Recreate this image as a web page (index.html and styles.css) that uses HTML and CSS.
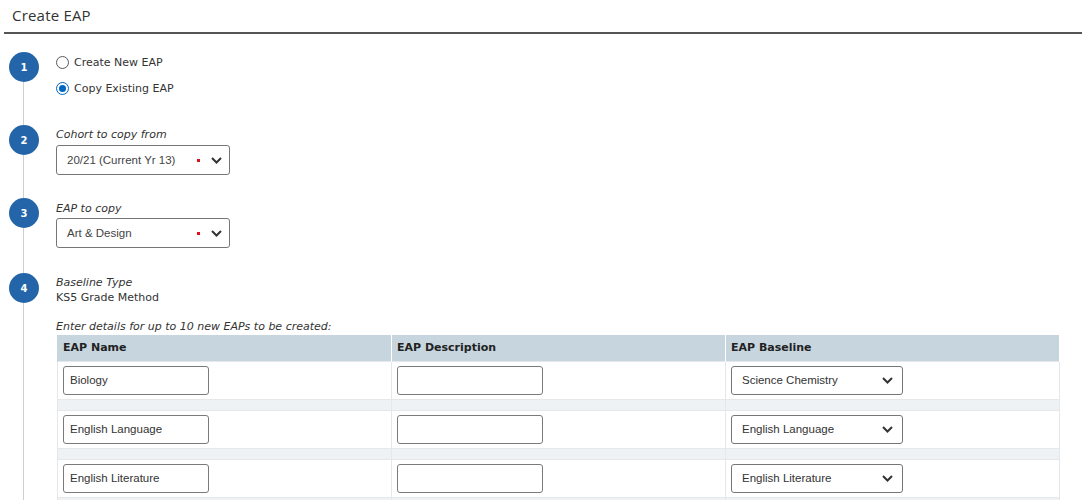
FILE: index.html
```html
<!DOCTYPE html>
<html>
<head>
<meta charset="utf-8">
<title>Create EAP</title>
<link rel="stylesheet" href="styles.css">
</head>
<body>
<header class="page-head">
  <h1 class="page-title">Create EAP</h1>
</header>

<div class="steps">
  <div class="step step-1">
    <div class="rail"><div class="num">1</div><div class="line"></div></div>
    <div class="body">
      <label class="radio-row"><span class="radio"></span>Create New EAP</label>
      <label class="radio-row"><span class="radio checked"></span>Copy Existing EAP</label>
    </div>
  </div>

  <div class="step step-2">
    <div class="rail"><div class="num">2</div><div class="line"></div></div>
    <div class="body">
      <div class="field-label">Cohort to copy from</div>
      <div class="fake-select wide">
        <span class="sel-text">20/21 (Current Yr 13)</span>
        <span class="req"></span>
        <svg class="chev" width="11" height="7" viewBox="0 0 11 7"><polyline points="1,1 5.5,5.5 10,1" fill="none" stroke="#333" stroke-width="2"/></svg>
      </div>
    </div>
  </div>

  <div class="step step-3">
    <div class="rail"><div class="num">3</div><div class="line"></div></div>
    <div class="body">
      <div class="field-label">EAP to copy</div>
      <div class="fake-select wide">
        <span class="sel-text">Art &amp; Design</span>
        <span class="req"></span>
        <svg class="chev" width="11" height="7" viewBox="0 0 11 7"><polyline points="1,1 5.5,5.5 10,1" fill="none" stroke="#333" stroke-width="2"/></svg>
      </div>
    </div>
  </div>

  <div class="step step-4">
    <div class="rail"><div class="num">4</div><div class="line"></div></div>
    <div class="body">
      <div class="field-label">Baseline Type</div>
      <div class="field-value">KS5 Grade Method</div>
      <div class="field-label enter">Enter details for up to 10 new EAPs to be created:</div>
      <table class="eap-table">
        <thead>
          <tr><th>EAP Name</th><th>EAP Description</th><th>EAP Baseline</th></tr>
        </thead>
        <tbody>
          <tr class="row">
            <td><div class="txt">Biology</div></td>
            <td><div class="txt"></div></td>
            <td><div class="fake-select base"><span class="sel-text">Science Chemistry</span><svg class="chev" width="11" height="7" viewBox="0 0 11 7"><polyline points="1,1 5.5,5.5 10,1" fill="none" stroke="#333" stroke-width="2"/></svg></div></td>
          </tr>
          <tr class="spacer"><td></td><td></td><td></td></tr>
          <tr class="row">
            <td><div class="txt">English Language</div></td>
            <td><div class="txt"></div></td>
            <td><div class="fake-select base"><span class="sel-text">English Language</span><svg class="chev" width="11" height="7" viewBox="0 0 11 7"><polyline points="1,1 5.5,5.5 10,1" fill="none" stroke="#333" stroke-width="2"/></svg></div></td>
          </tr>
          <tr class="spacer"><td></td><td></td><td></td></tr>
          <tr class="row">
            <td><div class="txt">English Literature</div></td>
            <td><div class="txt"></div></td>
            <td><div class="fake-select base"><span class="sel-text">English Literature</span><svg class="chev" width="11" height="7" viewBox="0 0 11 7"><polyline points="1,1 5.5,5.5 10,1" fill="none" stroke="#333" stroke-width="2"/></svg></div></td>
          </tr>
          <tr class="spacer"><td></td><td></td><td></td></tr>
        </tbody>
      </table>
    </div>
  </div>
</div>
</body>
</html>
```

FILE: styles.css
```css
* { box-sizing: border-box; }
html, body { margin: 0; padding: 0; background: #fff; }
body {
  font-family: "DejaVu Sans", Verdana, sans-serif;
  font-size: 11px;
  color: #333;
  width: 1090px;
  height: 500px;
  overflow: hidden;
}

.page-head {
  margin: 0 8px 0 4px;
  height: 34px;
  border-bottom: 2px solid #555;
  padding-left: 8px;
}
.page-title {
  margin: 0;
  font-family: "Open Sans", "Noto Sans", sans-serif;
  font-weight: 400;
  font-size: 15px;
  letter-spacing: 0.2px;
  line-height: 30px;
  color: #333;
}

.steps { padding-top: 18px; }
.step { display: flex; }
.rail {
  width: 56px;
  flex: none;
  display: flex;
  flex-direction: column;
  padding-left: 9px;
}
.num {
  width: 30px;
  height: 30px;
  border-radius: 50%;
  background: #2465a9;
  color: #fff;
  font-weight: bold;
  font-size: 10px;
  display: flex;
  align-items: center;
  justify-content: center;
  flex: none;
}
.line {
  flex: 1;
  width: 1px;
  margin-left: 14px;
  background: #cfcfcf;
}
.body { flex: 1; }

.step-1 .body { height: 73px; }
.radio-row {
  display: flex;
  align-items: center;
  height: 20px;
  margin-bottom: 6px;
  color: #333;
}
.radio {
  width: 13px;
  height: 13px;
  border: 1px solid #595959;
  border-radius: 50%;
  margin-right: 5px;
  display: flex;
  align-items: center;
  justify-content: center;
  flex: none;
}
.radio.checked { border-color: #0067c0; }
.radio.checked::after {
  content: "";
  width: 7px;
  height: 7px;
  border-radius: 50%;
  background: #0067c0;
}

.field-label {
  font-style: italic;
  line-height: 14px;
  color: #333;
}
.field-value { line-height: 15px; color: #333; }

.step-2 .body { padding-top: 3px; height: 73px; }
.step-2 .fake-select { margin-top: 3px; }
.step-3 .body { padding-top: 4px; height: 75px; }
.step-3 .fake-select { margin-top: 2px; }
.step-4 .body { padding-top: 2px; padding-bottom: 20px; }
.step-4 .field-label:first-child { line-height: 15px; }
.enter { margin-top: 15px; margin-bottom: 1px; }

.fake-select {
  display: flex;
  align-items: center;
  height: 30px;
  border: 1px solid #767676;
  border-radius: 3px;
  background: #fff;
  font-family: "Liberation Sans", Arial, sans-serif;
  font-size: 11.5px;
  color: #444;
  padding: 0 7px 0 10px;
}
.fake-select.wide { width: 174px; }
.fake-select .sel-text { flex: 1; }
.req {
  width: 3px;
  height: 3px;
  background: #e0101a;
  margin-right: 11px;
}
.chev { flex: none; }

.fake-select.base {
  width: 172px;
  height: 29px;
  color: #333;
  padding-left: 10px;
  padding-right: 9px;
}

.eap-table {
  width: 1003px;
  margin-left: 1px;
  border-collapse: collapse;
  table-layout: fixed;
}
.eap-table th {
  background: #c7d5df;
  height: 26px;
  text-align: left;
  font-weight: bold;
  font-size: 11px;
  color: #222;
  padding: 0 5px;
  border-right: 1px solid #fff;
  border-left: 1px solid #fff;
}
.eap-table th:first-child { border-left: 1px solid #c7d5df; }
.eap-table td {
  border: 1px solid #e4e8eb;
  padding: 0 5px;
}
.eap-table .row td { height: 38px; vertical-align: middle; }
.eap-table .spacer td { height: 11px; background: #eef2f5; padding: 0; }

.txt {
  width: 146px;
  height: 29px;
  border: 1px solid #7a7a7a;
  border-radius: 3px;
  font-family: "Liberation Sans", Arial, sans-serif;
  font-size: 11.5px;
  color: #333;
  line-height: 27px;
  padding-left: 6px;
  background: #fff;
}
```
